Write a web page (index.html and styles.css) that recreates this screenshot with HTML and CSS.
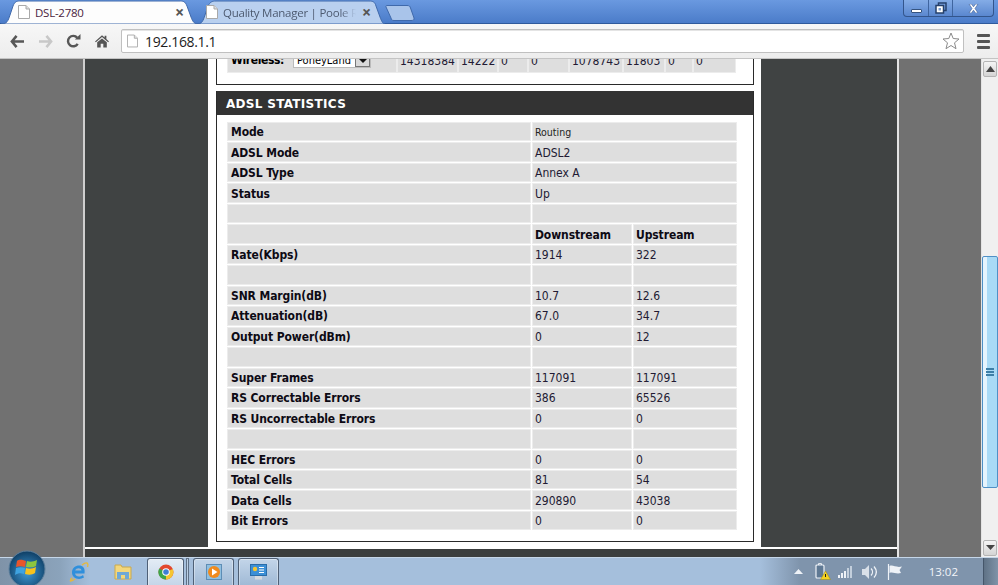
FILE: index.html
```html
<!DOCTYPE html>
<html lang="en">
<head>
  <meta charset="UTF-8" />
  <title>DSL-2780</title>
  <link rel="stylesheet" href="styles.css">
</head>
<body>

  <header class="tabstrip">
    <div class="tab tab-active">
      <svg class="tab-bg" width="198" height="24"><path d="M0 24C6 24 7 21 9 15L12 6C14 1 16 1 20 1H178C182 1 184 1 186 6L190 17C192 22 193 24 198 24Z" fill="#fdfdfd" stroke="#3f69ab"/></svg>
      <svg class="doc" width="12" height="14" viewBox="0 0 12 14"><path d="M.5.5H8L11.5 4V13.5H.5Z" fill="#fff" stroke="#a9a9a9"/><path d="M8 .5V4H11.5" fill="#ddd" stroke="#a9a9a9"/></svg>
      <span class="tab-title">DSL-2780</span>
      <span class="tab-close">×</span>
    </div>
    <div class="tab tab-back">
      <svg class="tab-bg" width="188" height="24"><path d="M0 24C5 24 6 21 8 15L11 6C13 2 15 1 19 1H172C176 1 178 2 179 6L183 17C185 22 186 24 188 24Z" fill="#b9d0ef" stroke="#3f69ab"/></svg>
      <svg class="doc" width="12" height="14" viewBox="0 0 12 14"><path d="M.5.5H8L11.5 4V13.5H.5Z" fill="#fff" stroke="#a9a9a9"/><path d="M8 .5V4H11.5" fill="#ddd" stroke="#a9a9a9"/></svg>
      <span class="tab-title">Quality Manager | Poole R</span>
      <span class="tab-close">×</span>
    </div>
    <svg class="newtab" width="32" height="16"><path d="M2 .5H22C24 .5 25 1 25.500 3L29 13C29.500 15 28 15.500 26 15.500H9C7 15.500 6.500 15 6 13L1 2C.7 1 1 .5 2 .5Z" fill="#a9c4ea" stroke="#3f69ab"/></svg>
    <div class="winbtns">
      <span class="winbtn winbtn-min"><i></i></span>
      <span class="winbtn winbtn-max"><svg width="12" height="12" viewBox="0 0 12 12"><path d="M3.500 3V1H11V8.500H8.500" fill="none" stroke="#26406b" stroke-width="1.500"/><rect x="1" y="3.500" width="7.500" height="7.500" fill="#fff" stroke="#26406b" stroke-width="1.500"/><rect x="3.500" y="6" width="2.500" height="2.500" fill="#7f9fcf"/></svg></span>
      <span class="winbtn winbtn-close"><svg width="11" height="9" viewBox="0 0 11 9"><path d="M1 0H3.500L5.500 2.800L7.500 0H10L7 4.500L10 9H7.500L5.500 6.200L3.500 9H1L4 4.500Z" fill="#fff" stroke="#3a5c94" stroke-width=".6"/></svg></span>
    </div>
  </header>

  <div class="toolbar">
    <svg class="tool tool-back" width="15" height="13" viewBox="0 0 16 14"><path d="M7 1L2 7L7 13M2 7H15" fill="none" stroke="#575757" stroke-width="2.800"/></svg>
    <svg class="tool tool-fwd" width="15" height="13" viewBox="0 0 16 14"><path d="M9 1L14 7L9 13M14 7H1" fill="none" stroke="#c8c8c8" stroke-width="2.800"/></svg>
    <svg class="tool tool-reload" width="15" height="14" viewBox="0 0 16 15"><path d="M12.500 10.500A5.600 5.600 0 1 1 12 4" fill="none" stroke="#575757" stroke-width="2.600"/><path d="M9.500 6H15.500V0Z" fill="#575757"/></svg>
    <svg class="tool tool-home" width="14" height="14" viewBox="0 0 16 15"><path d="M0 8L8 1L11 3.600V1.500H13V5.300L16 8L15 9L8 3L1 9Z" fill="#555"/><path d="M2.500 9L8 4.500L13.500 9V15H9.500V10.500H6.500V15H2.500Z" fill="#555"/></svg>
    <div class="omnibox">
      <svg class="doc" width="11" height="14" viewBox="0 0 12 14"><path d="M.5.500H8L11.500 4V13.500H.5Z" fill="#fff" stroke="#aaa"/><path d="M8 .5V4H11.500" fill="#e4e4e4" stroke="#aaa"/></svg>
      <span class="url">192.168.1.1</span>
      <svg class="star" width="18" height="18" viewBox="0 0 18 18"><path d="M9 1L11.200 6.500L17 7L12.500 10.800L14 16.700L9 13.500L4 16.700L5.500 10.800L1 7L6.800 6.500Z" fill="#fff" stroke="#8a8a8a"/></svg>
    </div>
    <div class="menu"><i></i><i></i><i></i></div>
  </div>

  <div class="viewport">
    <div class="page">
      <div class="frame">
        <div class="columns">
          <div class="side"></div>
          <main class="main">

            <section class="card card-lan">
              <div class="lan-row">
                <div class="lan-cell lan-label">
                  <b>Wireless:</b>
                  <span class="select">PoneyLand<span class="select-btn"></span></span>
                </div>
                <div class="lan-cell">14318384</div>
                <div class="lan-cell">14222</div>
                <div class="lan-cell">0</div>
                <div class="lan-cell">0</div>
                <div class="lan-cell">1078743</div>
                <div class="lan-cell">11803</div>
                <div class="lan-cell">0</div>
                <div class="lan-cell">0</div>
              </div>
            </section>

            <section class="card card-stats">
              <h2>ADSL STATISTICS</h2>
              <div class="stats">
                <div class="cell label">Mode</div><div class="cell wide small">Routing</div>
                <div class="cell label">ADSL Mode</div><div class="cell wide">ADSL2</div>
                <div class="cell label">ADSL Type</div><div class="cell wide">Annex A</div>
                <div class="cell label">Status</div><div class="cell wide">Up</div>
                <div class="cell"></div><div class="cell wide"></div>
                <div class="cell"></div><div class="cell b">Downstream</div><div class="cell b">Upstream</div>
                <div class="cell label">Rate(Kbps)</div><div class="cell">1914</div><div class="cell">322</div>
                <div class="cell"></div><div class="cell"></div><div class="cell"></div>
                <div class="cell label">SNR Margin(dB)</div><div class="cell">10.7</div><div class="cell">12.6</div>
                <div class="cell label">Attenuation(dB)</div><div class="cell">67.0</div><div class="cell">34.7</div>
                <div class="cell label">Output Power(dBm)</div><div class="cell">0</div><div class="cell">12</div>
                <div class="cell"></div><div class="cell"></div><div class="cell"></div>
                <div class="cell label">Super Frames</div><div class="cell">117091</div><div class="cell">117091</div>
                <div class="cell label">RS Correctable Errors</div><div class="cell">386</div><div class="cell">65526</div>
                <div class="cell label">RS Uncorrectable Errors</div><div class="cell">0</div><div class="cell">0</div>
                <div class="cell"></div><div class="cell"></div><div class="cell"></div>
                <div class="cell label">HEC Errors</div><div class="cell">0</div><div class="cell">0</div>
                <div class="cell label">Total Cells</div><div class="cell">81</div><div class="cell">54</div>
                <div class="cell label">Data Cells</div><div class="cell">290890</div><div class="cell">43038</div>
                <div class="cell label">Bit Errors</div><div class="cell">0</div><div class="cell">0</div>
              </div>
            </section>

          </main>
          <div class="side"></div>
        </div>
      </div>
    </div>
    <div class="scrollbar">
      <div class="sb-btn"><svg width="9" height="6" viewBox="0 0 9 6"><path d="M4.500 0L9 6H0Z" fill="#444"/></svg></div>
      <div class="sb-thumb"><i></i><i></i><i></i></div>
      <div class="sb-btn sb-btn-down"><svg width="9" height="6" viewBox="0 0 9 6"><path d="M0 0H9L4.500 5Z" fill="#444"/></svg></div>
    </div>
  </div>

  <footer class="taskbar">
    <svg class="orb" width="38" height="38" viewBox="0 0 38 38">
      <defs>
        <radialGradient id="orbfill" cx="50%" cy="60%" r="60%"><stop offset="0" stop-color="#3f9ad6"/><stop offset="1" stop-color="#0e3d63"/></radialGradient>
      </defs>
      <circle cx="19" cy="19" r="18" fill="url(#orbfill)" stroke="#5d7f9c"/>
      <path d="M9 11C12 9 14 10 18 11L17 17C14 16 11 16 8 17Z" fill="#e8552b"/>
      <path d="M19 11C22 12 25 12 29 10L28 16C25 18 22 17 18 17Z" fill="#8cc63f"/>
      <path d="M8 18C11 17 14 17 17 18L16 24C13 23 10 23 7 25Z" fill="#3fa3e0"/>
      <path d="M18 18C21 19 24 19 28 17L27 23C24 25 21 25 17 24Z" fill="#f8c21c"/>
    </svg>
    <div class="pin pin-ie">
      <svg width="20" height="20" viewBox="0 0 20 20"><path d="M15.500 11.500H6C6.500 15 11 15.500 14 13L15 15.500C10 18.500 3 16.500 3 10.500C3 5 8.500 2.500 12.500 4C15.500 5.200 16 8.500 15.500 11.500ZM6.200 8.500H12.500C12.200 5.500 7 5.500 6.200 8.500Z" fill="#2f8fdc"/><path d="M3 16C0 20 1 20 6 17M13 3C17 0 20 0 18.500 5" fill="none" stroke="#e8b93a" stroke-width="1.300"/></svg>
    </div>
    <div class="pin pin-folder">
      <svg width="18" height="16" viewBox="0 0 18 16"><path d="M1 1H7L8 3H17V15H1Z" fill="#f3d77c" stroke="#c9a94f"/><path d="M3 8H15V15H11V11H7V15H3Z" fill="#6fa8d6"/></svg>
    </div>
    <div class="task task-active">
      <svg width="16" height="16" viewBox="0 0 16 16"><circle cx="8" cy="8" r="7.500" fill="#e2482f"/><path d="M8 8L14.800 5A7.500 7.500 0 0 1 8 15.500Z" fill="#f5c631"/><path d="M8 8L8 15.500A7.500 7.500 0 0 1 1.200 4.500Z" fill="#3ea64a"/><circle cx="8" cy="8" r="3.800" fill="#fff"/><circle cx="8" cy="8" r="2.800" fill="#3f7fd6"/></svg>
    </div>
    <div class="task-sep"></div>
    <div class="task">
      <svg width="16" height="16" viewBox="0 0 16 16"><rect x=".5" y=".5" width="15" height="15" fill="#8fbfe0" stroke="#5d8db5"/><circle cx="8" cy="8" r="6" fill="#f08a1d"/><path d="M6 4.500L11.500 8L6 11.500Z" fill="#fff"/></svg>
    </div>
    <div class="task">
      <svg width="17" height="16" viewBox="0 0 17 16"><rect x=".5" y=".5" width="16" height="11" fill="#3b8fd6" stroke="#2a6ca8"/><circle cx="5" cy="5" r="2.200" fill="#f5c631"/><path d="M9 3.500H14M9 6H14M9 8.500H14" stroke="#fff"/><rect x="5" y="12" width="7" height="3.500" fill="#d5d9de"/></svg>
    </div>
    <div class="tray">
      <svg width="9" height="5" viewBox="0 0 9 5"><path d="M4.500 0L9 5H0Z" fill="#eef2f7"/></svg>
      <svg class="tray-batt" width="16" height="17" viewBox="0 0 16 17"><rect x="1" y="2" width="8" height="13" rx="1" fill="#5f7994" stroke="#eef2f7" stroke-width="1.200"/><path d="M3.500 2V.6H6.500V2" fill="none" stroke="#eef2f7"/><path d="M10.500 8L15.500 16.500H5.500Z" fill="#f4d21f" stroke="#9c8a1a" stroke-width=".5"/><path d="M10.500 11V14" stroke="#222"/></svg>
      <svg width="16" height="13" viewBox="0 0 16 13"><path d="M1 10h2v3H1zM4 8h2v5H4zM7 6h2v7H7z" fill="#eef2f7"/><path d="M10 3h2v10h-2zM13 1h2v12h-2z" fill="#c3cfdc"/></svg>
      <svg width="16" height="14" viewBox="0 0 16 14"><path d="M0 4H3L7 0V14L3 10H0Z" fill="#d9e0e8"/><path d="M9 3.500C11 5.500 11 8.500 9 10.500M12 1.500C15 5 15 9 12 12.500" fill="none" stroke="#eef2f7" stroke-width="1.300"/></svg>
      <svg width="16" height="16" viewBox="0 0 16 16"><path d="M1.500 0V16" stroke="#eef2f7" stroke-width="1.200"/><path d="M2.500 2C6 .5 9 4 15 2.500L12.500 6L14 9C9 10.500 6 7.500 2.500 9Z" fill="#eef2f7"/></svg>
      <span class="clock">13:02</span>
    </div>
    <div class="showdesk"></div>
  </footer>

</body>
</html>
```

FILE: styles.css
```css
* { margin: 0; padding: 0; box-sizing: border-box; }
html, body { width: 998px; height: 585px; overflow: hidden; }
body { display: flex; flex-direction: column; font-family: 'Open Sans', 'Liberation Sans', sans-serif; background: #717171; }

/* browser tabs */
.tabstrip { position: relative; height: 24px; flex: none; display: flex; background: linear-gradient(#6a99e0, #4b7cc9); border-bottom: 1px solid #2f5a9c; }
.tab { position: relative; height: 24px; display: flex; align-items: center; font-family: 'Open Sans', sans-serif; font-size: 11.500px; letter-spacing: -.25px; }
.tab-bg { position: absolute; left: 0; top: 0; overflow: visible; }
.tab > .doc, .tab > span { position: relative; }
.tab-active { width: 193px; padding-left: 17px; margin-left: 1px; z-index: 2; color: #4a2340; }
.tab-back { width: 193px; padding-left: 9px; margin-left: 3px; color: #4d5a70; }
.tab-title { margin-left: 5px; width: 140px; white-space: nowrap; overflow: hidden; }
.tab-back .tab-title { width: 133px; -webkit-mask-image: linear-gradient(90deg, #000 88%, transparent); mask-image: linear-gradient(90deg, #000 88%, transparent); }
.tab-close { font-size: 16px; font-weight: 700; color: #555; line-height: 1; }
.tab-back .tab-close { margin-left: 6px; }
.newtab { margin: 5px 0 0 -5px; }
.winbtns { position: absolute; right: 4px; top: 0; height: 17px; display: flex; border: 1px solid #33558c; border-top: none; border-radius: 0 0 4px 4px; background: linear-gradient(#84ace6, #5a87cf); }
.winbtn { display: flex; align-items: center; justify-content: center; height: 16px; border-right: 1px solid #3f659f; }
.winbtn:last-child { border-right: none; }
.winbtn-min { width: 25px; }
.winbtn-min i { display: block; width: 11px; height: 4px; margin-top: 5px; background: #fff; border: 1px solid #35537f; border-radius: 1px; }
.winbtn-max { width: 24px; }
.winbtn-close { width: 40px; }

/* browser toolbar */
.toolbar { height: 35px; flex: none; display: flex; align-items: center; background: linear-gradient(#f7f7f7, #ededed); border-bottom: 1px solid #c4c4c4; position: relative; z-index: 2; }
.tool { flex: none; }
.tool-back { margin-left: 10px; }
.tool-fwd { margin-left: 13px; }
.tool-reload { margin-left: 13px; }
.tool-home { margin-left: 14px; }
.omnibox { width: 843px; height: 24px; flex: none; margin-left: 12px; display: flex; align-items: center; background: #fff; border: 1px solid #c0c0c0; border-radius: 2px; padding: 0 3px 0 5px; box-shadow: inset 0 1px 0 #e4e4e4; }
.url { font-size: 14px; letter-spacing: -.35px; color: #1c1c1c; margin-left: 7px; flex: 1; }
.menu { width: 13px; margin-left: 13px; flex: none; display: flex; flex-direction: column; gap: 3px; }
.menu i { display: block; height: 3px; background: #555; border-radius: 1px; }

/* page content */
.viewport { flex: 1; display: flex; min-height: 0; }
.page { flex: 1; padding: 0 82px 0 83px; background: #717171; overflow: hidden; }
.frame { height: 100%; padding-bottom: 8px; background: #3b3e3e; border-left: 2px solid #cfcfcf; border-right: 2px solid #e4e4e4; }
.columns { height: 100%; display: grid; grid-template-columns: 123px 553px 1fr; background: #fff; padding-bottom: 2px; }
.side { background: #404343; }
.main { background: #fff; padding: 0 7px 0 8px; overflow: hidden; font-family: 'DejaVu Sans Condensed', 'DejaVu Sans', sans-serif; font-stretch: condensed; font-size: 12px; color: #221a33; }
.card { border: 1px solid #2a2a2a; border-top: none; padding: 0 16px 0 10px; background: #fff; }

.card-lan { margin-top: -12px; padding-top: 3px; padding-bottom: 11px; margin-bottom: 6px; }
.lan-row { display: grid; grid-template-columns: 170px 61px 40px 30px 41px 54px 42px 28px 43px; gap: 0; }
.lan-cell { height: 23px; background: #dedede; border: 1px solid #ececec; padding: 3px 0 0 2px; white-space: nowrap; line-height: 14px; }
.lan-label { display: flex; padding-left: 3px; padding-top: 2px; color: #000; }
.lan-label b { display: block; width: 62px; letter-spacing: -.4px; }
.select { display: block; width: 78px; height: 14px; margin-top: 1px; padding-left: 3px; background: #fff; border: 1px solid #bbb; position: relative; font-size: 11px; line-height: 12px; }
.select-btn { position: absolute; right: 0; top: 0; width: 15px; height: 12px; background: #d9d9d9; border: 1px solid #777; }
.select-btn::after { content: ""; position: absolute; left: 3px; top: 3px; border: 4px solid transparent; border-top: 4px solid #111; border-bottom: none; }

.card-stats { padding-bottom: 11px; }
.card-stats h2 { height: 24px; margin: 0 -16px 7px -10px; padding-left: 9px; background: #333; color: #fff; font: 700 12px/26px 'DejaVu Sans', sans-serif; letter-spacing: .3px; }
.stats { display: grid; grid-template-columns: 304px 100px 104px; grid-auto-rows: 19.47px; gap: 1px; margin-right: -1px; }
.cell { display: flex; align-items: center; padding: 1px 2px 0; background: #dedede; border: 1px solid #ececec; white-space: nowrap; }
.cell.b, .cell.label { font-weight: 700; color: #0d0a14; letter-spacing: -.1px; }
.cell.label { padding-left: 3px; }
.cell.wide { grid-column: span 2; }
.cell.small { font-size: 10.500px; color: #222; }

/* scrollbar */
.scrollbar { width: 17px; flex: none; display: flex; flex-direction: column; background: #f0f0f0; padding-top: 2px; border-left: 1px solid #e4e4e4; }
.sb-btn { height: 16px; margin: 0 1px; display: flex; align-items: center; justify-content: center; background: linear-gradient(#f5f5f5, #d4d4d4); border: 1px solid #b4b4b4; border-radius: 2px; }
.sb-thumb { height: 232px; margin-top: 179px; display: flex; flex-direction: column; justify-content: center; align-items: center; gap: 1px; background: linear-gradient(90deg, #e6f4fd 0 25%, #a9daf6 25% 100%); border: 1px solid #4f90c6; border-radius: 2px; }
.sb-thumb i { display: block; width: 8px; height: 2px; background: #3d7fa8; }
.sb-btn-down { margin-top: 52px; }

/* windows taskbar */
.taskbar { position: relative; height: 28px; flex: none; display: flex; align-items: center; border-top: 1px solid #c5d6e8; background: linear-gradient(90deg, #7f93a8 0, #8ba3bb 60px, #a5bfdc 90px, #a5bfdc 760px, #7f94ac 800px); }
.orb { position: absolute; left: 8px; top: -8px; }
.pin { width: 44px; display: flex; justify-content: center; }
.pin-ie { margin-left: 57px; }
.task { width: 41px; height: 28px; margin-left: 4px; display: flex; align-items: center; justify-content: center; background: linear-gradient(#c3d5e9, #9fb9d5); border: 1px solid #4f6076; border-bottom: none; border-radius: 3px 3px 0 0; box-shadow: inset 0 0 0 1px rgba(255,255,255,.35); }
.task-active { width: 37px; margin-left: 2px; background: linear-gradient(#e3ecf5, #c4d5e8); }
.task-sep { width: 3px; height: 28px; margin-left: 2px; background: #bcd0e5; border: 1px solid #5f7187; border-bottom: none; }
.tray { margin-left: auto; display: flex; align-items: center; gap: 9px; padding-right: 25px; }
.tray-batt { margin: 0 -3px 0 3px; }
.clock { margin-left: 17px; font-size: 11.500px; color: #f2f5f9; }
.showdesk { width: 15px; height: 27px; background: linear-gradient(90deg, #5f7286, #7f93a8); border-left: 1px solid #45566a; }
```
